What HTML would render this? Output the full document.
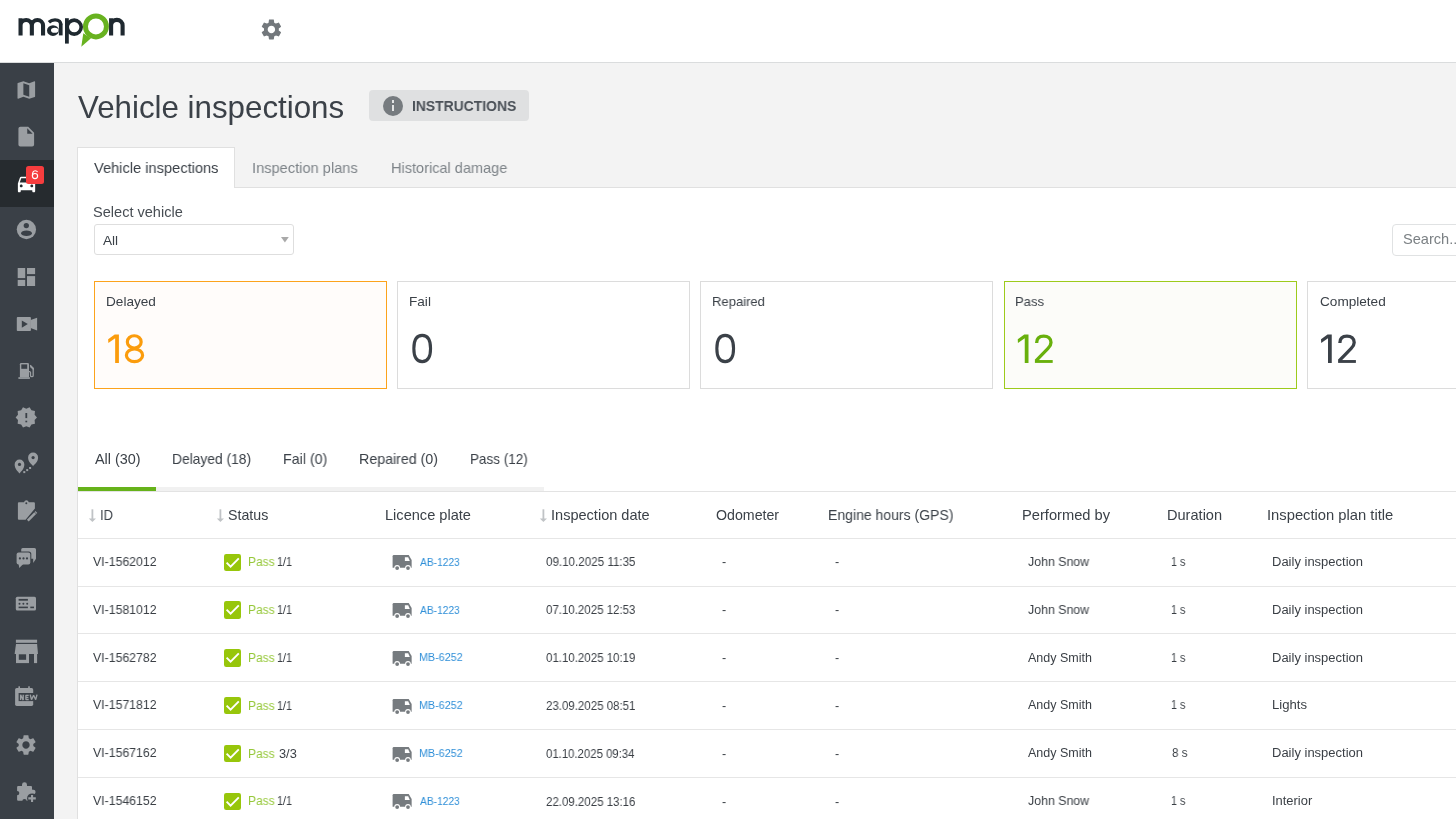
<!DOCTYPE html>
<html><head><meta charset="utf-8">
<style>
*{box-sizing:border-box;margin:0;padding:0}
html,body{width:1456px;height:819px;overflow:hidden;background:#f3f3f3;font-family:"Liberation Sans",sans-serif;color:#3b4148}
.t{position:absolute;line-height:1;white-space:pre;transform-origin:0 0;will-change:transform}
.a{position:absolute}
svg{position:absolute;overflow:visible}
</style></head><body>
<!-- header -->
<div class="a" style="left:0;top:0;width:1456px;height:62px;background:#fff"></div>
<div class="a" style="left:0;top:62px;width:1456px;height:1px;background:#dadcdd"></div>
<!-- logo -->
<svg style="left:0;top:0" width="140" height="60" viewBox="0 0 140 60">
 <g fill="none" stroke="#1f2930" stroke-width="4.1">
  <path d="M20.55 18.2V35.6M20.55 25.6A5.65 5.65 0 0 1 31.85 25.6V35.6M31.85 25.6A5.6 5.6 0 0 1 43.05 25.6V35.6"/>
  <path d="M60.75 23.5V35.4" stroke-width="3.7"/>
  <path d="M48.9 22.2C50.6 20.6 52.6 19.9 55 19.9C58.8 19.9 60.75 21.8 60.75 24.8" stroke-width="3.4"/>
  <path d="M66.9 18.2V43.6" stroke-width="3.8"/>
  <circle cx="74.2" cy="27.1" r="7.0" stroke-width="3.6"/>
  <path d="M111.1 18.2V35.6M111.1 25.6A5.75 5.75 0 0 1 122.6 25.6V35.6"/>
 </g>
 <path fill="#1f2930" fill-rule="evenodd" d="M47 30.55A5.95 5.35 0 0 0 58.9 30.55A5.95 5.35 0 0 0 47 30.55ZM50.95 30.3A3.75 2.55 0 0 0 58.45 30.3A3.75 2.55 0 0 0 50.95 30.3Z"/>
 <circle cx="95.95" cy="26.45" r="10.5" fill="none" stroke="#68b220" stroke-width="4.95"/>
 <path d="M83.3 33.3L91 38.2L81.3 46.7Z" fill="#68b220"/>
</svg>
<!-- header gear -->
<svg style="left:259.4px;top:17.2px" width="24" height="24" viewBox="0 0 24 24"><path fill="#73787c" transform="translate(12.4 12.5) scale(1.03) translate(-12 -12)" d="M19.14 12.94c.04-.3.06-.61.06-.94 0-.32-.02-.64-.07-.94l2.03-1.58c.18-.14.23-.41.12-.61l-1.92-3.32c-.12-.22-.37-.29-.59-.22l-2.39.96c-.5-.38-1.03-.7-1.62-.94l-.36-2.54c-.04-.24-.24-.41-.48-.41h-3.84c-.24 0-.43.17-.47.41l-.36 2.54c-.59.24-1.13.57-1.62.94l-2.39-.96c-.22-.08-.47 0-.59.22L2.74 8.87c-.12.21-.08.47.12.61l2.03 1.58c-.05.3-.09.63-.09.94s.02.64.07.94l-2.030 1.58c-.18.14-.23.41-.12.61l1.92 3.32c.12.22.37.29.59.22l2.39-.96c.5.38 1.03.7 1.62.94l.36 2.54c.05.24.24.41.48.41h3.84c.24 0 .44-.17.47-.41l.36-2.54c.59-.24 1.13-.56 1.62-.94l2.39.96c.22.08.47 0 .59-.22l1.92-3.32c.12-.22.07-.47-.12-.61l-2.01-1.58zM12 15.6c-1.98 0-3.6-1.62-3.6-3.6s1.62-3.6 3.6-3.6 3.6 1.62 3.6 3.6-1.62 3.6-3.6 3.6z"/></svg>

<!-- sidebar -->
<div class="a" style="left:0;top:63px;width:54px;height:756px;background:#3a4047"></div>
<div class="a" style="left:0;top:160.3px;width:54px;height:46.5px;background:#262b2f"></div>
<svg style="left:12px;top:75.10px" width="30" height="30" viewBox="0 0 30 30"><path fill="#9a9ea2" transform="translate(2.57 3.27) scale(0.978)" d="M20.5 3l-.16.03L15 5.1 9 3 3.36 4.9c-.21.07-.36.25-.36.48V20.5c0 .28.22.5.5.5l.16-.03L9 18.9l6 2.1 5.64-1.9c.21-.07.36-.25.36-.48V3.5c0-.28-.22-.5-.5-.5zM15 19l-6-2.11V5l6 2.11V19z"/></svg>
<svg style="left:12px;top:121.86px" width="30" height="30" viewBox="0 0 30 30"><path fill="#9a9ea2" transform="translate(2.5 2.9) scale(0.98)" d="M6 2c-1.1 0-1.99.9-1.99 2L4 20c0 1.1.89 2 1.99 2H18c1.1 0 2-.9 2-2V8l-6-6H6zm7 7V3.5L18.5 9H13z"/></svg>
<svg style="left:14.6px;top:172.2px" width="24" height="24" viewBox="0 0 24 24"><path fill="#fff" transform="scale(0.96)" d="M18.92 6.01C18.72 5.42 18.16 5 17.5 5h-11c-.66 0-1.21.42-1.42 1.01L3 12v8c0 .55.45 1 1 1h1c.55 0 1-.45 1-1v-1h12v1c0 .55.45 1 1 1h1c.55 0 1-.45 1-1v-8l-2.08-5.99zM6.5 16c-.83 0-1.5-.67-1.5-1.5S5.67 13 6.5 13s1.5.67 1.5 1.5S7.33 16 6.5 16zm11 0c-.83 0-1.5-.67-1.5-1.5s.67-1.5 1.5-1.5 1.5.67 1.5 1.5-.67 1.5-1.5 1.5zM5 11l1.5-4.5h11L19 11H5z"/></svg><div class="a" style="left:26.3px;top:166px;width:17.7px;height:17.8px;background:#f63d3e;border-radius:2.5px"></div><svg style="left:0;top:0" width="60" height="200" viewBox="0 0 60 200"><ellipse cx="35" cy="176.05" rx="2.6" ry="2.55" fill="none" stroke="#fff" stroke-width="1.15"/><path d="M32.42 176.1C32.3 172.6 33.3 170.7 35.25 170.7C36.3 170.7 37.1 171.2 37.55 172.1" fill="none" stroke="#fff" stroke-width="1.15"/></svg>
<svg style="left:12px;top:215.38px" width="30" height="30" viewBox="0 0 30 30"><circle cx="14.4" cy="14.5" r="9.65" fill="#9a9ea2"/><circle cx="14.3" cy="10.6" r="2.65" fill="#3a4047"/><ellipse cx="14.5" cy="18.3" rx="5.5" ry="2.75" fill="#3a4047"/></svg>
<svg style="left:12px;top:262.14px" width="30" height="30" viewBox="0 0 30 30"><g fill="#9a9ea2"><rect x="5.7" y="6" width="7.5" height="10.1"/><rect x="5.7" y="17.9" width="7.5" height="6.1"/><rect x="15" y="6" width="8.1" height="6.1"/><rect x="15" y="14.1" width="8.1" height="9.9"/></g></svg>
<svg style="left:12px;top:308.90px" width="30" height="30" viewBox="0 0 30 30"><rect x="4.8" y="8.1" width="14.1" height="13.9" rx="0.8" fill="#9a9ea2"/><path d="M18.6 11L25.1 8.8V21.6L18.6 19Z" fill="#9a9ea2"/><path d="M9.8 11.4L15.8 15.05L9.8 18.7Z" fill="#3a4047"/></svg>
<svg style="left:12px;top:355.66px" width="30" height="30" viewBox="0 0 30 30"><path d="M7.9 8.2Q7.9 7 9.1 7H15.8Q17 7 17 8.2V21.3H7.9Z" fill="#9a9ea2"/><rect x="6.4" y="21.2" width="11.5" height="1.7" fill="#9a9ea2"/><rect x="9.3" y="8.4" width="5.9" height="4.4" fill="#3a4047"/><path d="M17 15.6H17.6Q18.5 15.6 18.5 16.5V19.4Q18.5 20.6 19.8 20.6Q21.2 20.6 21.2 19.4V12.3L18.2 9.3" fill="none" stroke="#9a9ea2" stroke-width="1.3"/><path d="M18.1 8.9L21.9 12.2V14.4L18.2 11.2Z" fill="#9a9ea2"/></svg>
<svg style="left:12px;top:402.42px" width="30" height="30" viewBox="0 0 30 30"><polygon points="25.00,15.40 22.62,18.10 22.96,21.69 19.44,22.48 17.61,25.58 14.30,24.15 10.99,25.58 9.16,22.48 5.64,21.69 5.98,18.10 3.60,15.40 5.98,12.70 5.64,9.11 9.16,8.32 10.99,5.22 14.30,6.65 17.61,5.22 19.44,8.32 22.96,9.11 22.62,12.70" fill="#9a9ea2"/><rect x="13.4" y="11" width="1.8" height="5.1" fill="#3a4047"/><rect x="13.4" y="18.7" width="1.8" height="1.6" fill="#3a4047"/></svg>
<svg style="left:12px;top:449.18px" width="30" height="30" viewBox="0 0 30 30"><path d="M2.65 15.40A4.85 4.85 0 0 1 12.35 15.40C12.35 19.77 8.96 22.40 7.50 24.40C6.04 22.40 2.65 19.77 2.65 15.40Z" fill="#9a9ea2"/><circle cx="7.5" cy="15.4" r="1.6" fill="#3a4047"/><path d="M16.10 8.60A5.0 5.0 0 0 1 26.10 8.60C26.10 13.10 22.60 15.20 21.10 17.20C19.60 15.20 16.10 13.10 16.10 8.60Z" fill="#9a9ea2"/><circle cx="21.1" cy="8.6" r="1.6" fill="#3a4047"/><g fill="#9a9ea2"><rect x="11.3" y="22.1" width="2" height="2"/><rect x="14.2" y="20.1" width="2" height="2"/><rect x="17.1" y="18" width="2" height="2"/></g></svg>
<svg style="left:12px;top:495.94px" width="30" height="30" viewBox="0 0 30 30"><path d="M5.9 7.2Q5.9 6.2 6.9 6.2H12Q12.6 4.2 14.4 4.2Q16.2 4.2 16.8 6.2H21.9Q22.9 6.2 22.9 7.2V12.6L13.6 23.8H6.9Q5.9 23.8 5.9 22.8Z" fill="#9a9ea2"/><circle cx="14.3" cy="7.3" r="1" fill="#3a4047"/><path d="M15.8 24.6L23.2 17.2" stroke="#9a9ea2" stroke-width="2.6"/><path d="M23.6 16.8L24.4 16" stroke="#9a9ea2" stroke-width="2.6"/></svg>
<svg style="left:12px;top:542.70px" width="30" height="30" viewBox="0 0 30 30"><path d="M9.2 6.5Q9.2 5 10.7 5H22.5Q24 5 24 6.5V15.8L21.2 20V15.8H9.2Z" fill="#9a9ea2"/><rect x="3.6" y="8.5" width="15.7" height="13.9" rx="2.6" fill="#3a4047"/><rect x="4.6" y="9.5" width="13.7" height="11.9" rx="2" fill="#9a9ea2"/><path d="M6.6 21H11.2L7.3 24.9Z" fill="#9a9ea2"/><g fill="#3a4047"><circle cx="7.9" cy="15.4" r="1.1"/><circle cx="11.5" cy="15.4" r="1.1"/><circle cx="15" cy="15.4" r="1.1"/></g></svg>
<svg style="left:12px;top:589.46px" width="30" height="30" viewBox="0 0 30 30"><rect x="3.8" y="7.7" width="20.2" height="13.9" rx="1.5" fill="#9a9ea2"/><g fill="#3a4047"><rect x="6.6" y="9.9" width="9.3" height="1.8"/><circle cx="7.5" cy="14.7" r="1"/><circle cx="11.4" cy="14.7" r="1"/><circle cx="15.2" cy="14.7" r="1"/><rect x="6.6" y="17.6" width="9.3" height="1.6"/><rect x="18.3" y="17.6" width="3.7" height="1.6"/></g></svg>
<svg style="left:12px;top:636.22px" width="30" height="30" viewBox="0 0 30 30"><g fill="#9a9ea2"><rect x="3.9" y="3.7" width="21.2" height="3.1"/><path d="M4 8.1H25.1L26 17.9H2.6Z"/><path d="M4 17.9H17V27.1H4Z"/><rect x="22" y="17.9" width="3.1" height="9.2"/></g><rect x="6.8" y="18.3" width="7.3" height="5.5" fill="#3a4047"/></svg>
<svg style="left:12px;top:682.98px" width="30" height="30" viewBox="0 0 30 30"><rect x="3.1" y="5.1" width="18.1" height="17.8" rx="1.6" fill="#9a9ea2"/><rect x="6.4" y="3.3" width="1.6" height="3" fill="#9a9ea2"/><rect x="16.2" y="3.3" width="1.6" height="3" fill="#9a9ea2"/><rect x="6.6" y="10" width="19.6" height="8.1" fill="#3a4047"/><path d="M8.6 17.1V11.7L11.2 17.1V11.7M16.7 12.3H13.9V16.5H16.7M13.9 14.4H16.4M18.2 11.7L19.5 16.7L21.6 12.3L23.7 16.7L25 11.7" fill="none" stroke="#9a9ea2" stroke-width="1.35" stroke-linejoin="bevel"/></svg>
<svg style="left:14.3px;top:732.74px" width="24" height="24" viewBox="0 0 24 24"><path fill="#9a9ea2" transform="translate(12 12) scale(1.02) translate(-12 -12)" d="M19.14 12.94c.04-.3.06-.61.06-.94 0-.32-.02-.64-.07-.94l2.03-1.58c.18-.14.23-.41.12-.61l-1.92-3.32c-.12-.22-.37-.29-.59-.22l-2.39.96c-.5-.38-1.03-.7-1.62-.94l-.36-2.54c-.04-.24-.24-.41-.48-.41h-3.84c-.24 0-.43.17-.47.41l-.36 2.54c-.59.24-1.13.57-1.62.94l-2.39-.96c-.22-.08-.47 0-.59.22L2.74 8.870c-.12.21-.08.47.12.61l2.03 1.58c-.05.3-.09.63-.09.94s.02.64.07.94l-2.03 1.58c-.18.14-.23.41-.12.61l1.92 3.32c.12.22.37.29.59.22l2.39-.96c.5.38 1.03.7 1.62.94l.36 2.54c.05.24.24.41.48.41h3.84c.24 0 .44-.17.47-.41l.36-2.54c.59-.24 1.13-.56 1.62-.94l2.39.96c.22.08.47 0 .59-.22l1.92-3.32c.12-.22.07-.47-.12-.61l-2.01-1.58zM12 15.6c-1.98 0-3.6-1.62-3.6-3.6s1.62-3.6 3.6-3.6 3.6 1.62 3.6 3.6-1.62 3.6-3.6 3.6z"/></svg>
<svg style="left:12px;top:776.50px" width="30" height="30" viewBox="0 0 30 30"><g fill="#9a9ea2"><rect x="5.1" y="9" width="14.9" height="14.8" rx="1"/><circle cx="12.5" cy="7.7" r="2.45"/><rect x="10.05" y="7.7" width="4.9" height="2"/><circle cx="21.2" cy="15.1" r="2.4"/><rect x="19" y="12.7" width="2.2" height="4.8"/></g><g fill="#3a4047"><circle cx="5.1" cy="16.1" r="2.2"/><circle cx="12.5" cy="24.3" r="2.2"/><circle cx="20.1" cy="21.4" r="5.0"/></g><path d="M20.05 17.9V24.9M16.3 21.4H23.8" stroke="#9a9ea2" stroke-width="2.1"/></svg>

<!-- main -->
<!-- title + button -->
<div class="a" style="left:368.8px;top:90.3px;width:160px;height:30.7px;background:#dfe0e1;border-radius:4px"></div>
<div class="a" style="left:382.8px;top:95.5px;width:20.3px;height:20.3px;background:#767b7f;border-radius:50%"></div>
<div class="a" style="left:391.8px;top:104.8px;width:2.4px;height:6.3px;background:#e3e4e5"></div>
<div class="a" style="left:391.8px;top:100.4px;width:2.4px;height:2.5px;background:#e3e4e5"></div>

<!-- tab bar -->
<div class="a" style="left:77px;top:187px;width:1379px;height:632px;background:#fff;border-left:1px solid #e0e0e0;border-top:1px solid #e0e0e0"></div>
<div class="a" style="left:77px;top:147px;width:158px;height:41px;background:#fff;border:1px solid #e0e0e0;border-bottom:none"></div>

<!-- select -->
<div class="a" style="left:94.2px;top:224.2px;width:199.4px;height:30.5px;background:#fff;border:1px solid #dedede;border-radius:3px"></div>
<svg style="left:281px;top:236.9px" width="8" height="6" viewBox="0 0 8 6"><path d="M0 0H7.8L3.9 5.5Z" fill="#a9a9a9"/></svg>
<!-- search -->
<div class="a" style="left:1392.3px;top:224px;width:120px;height:32px;background:#fff;border:1px solid #e0e2e3;border-radius:4px"></div>

<!-- cards -->
<div class="a" style="left:94px;top:281px;width:293px;height:108px;background:#fffcfa;border:1px solid #fca31c"></div>
<div class="a" style="left:397px;top:281px;width:293px;height:108px;background:#fff;border:1px solid #dcdcdc"></div>
<div class="a" style="left:700px;top:281px;width:293px;height:108px;background:#fff;border:1px solid #dcdcdc"></div>
<div class="a" style="left:1004px;top:281px;width:293px;height:108px;background:#fcfcf9;border:1px solid #9dcb1c"></div>
<div class="a" style="left:1307px;top:281px;width:293px;height:108px;background:#fff;border:1px solid #dcdcdc"></div>

<!-- filter tabs underline -->
<div class="a" style="left:78px;top:487px;width:466px;height:4px;background:#f1f1f1"></div>
<div class="a" style="left:78px;top:487px;width:78px;height:4px;background:#66b21a"></div>

<!-- table lines -->
<div class="a" style="left:78px;top:491px;width:1378px;height:1px;background:#e3e3e3"></div>
<div class="a" style="left:78px;top:537.7px;width:1378px;height:1px;background:#e6e6e6"></div>
<div class="a" style="left:78px;top:585.5px;width:1378px;height:1px;background:#e6e6e6"></div>
<div class="a" style="left:78px;top:633.4px;width:1378px;height:1px;background:#e6e6e6"></div>
<div class="a" style="left:78px;top:681.3px;width:1378px;height:1px;background:#e6e6e6"></div>
<div class="a" style="left:78px;top:729.2px;width:1378px;height:1px;background:#e6e6e6"></div>
<div class="a" style="left:78px;top:777.1px;width:1378px;height:1px;background:#e6e6e6"></div>

<svg style="left:88.2px;top:508.8px" width="9" height="14" viewBox="0 0 9 14"><rect x="3.5" y="0.3" width="1.8" height="10" fill="#c0c3c6"/><path d="M0.8 9.4H8L4.4 13Z" fill="#c0c3c6"/></svg>
<svg style="left:215.8px;top:508.8px" width="9" height="14" viewBox="0 0 9 14"><rect x="3.5" y="0.3" width="1.8" height="10" fill="#c0c3c6"/><path d="M0.8 9.4H8L4.4 13Z" fill="#c0c3c6"/></svg>
<svg style="left:539.0px;top:508.8px" width="9" height="14" viewBox="0 0 9 14"><rect x="3.5" y="0.3" width="1.8" height="10" fill="#c0c3c6"/><path d="M0.8 9.4H8L4.4 13Z" fill="#c0c3c6"/></svg>
<div class="a" style="left:224.1px;top:553.60px;width:17.3px;height:17.3px;background:#97c60b;border-radius:2.2px"></div>
<svg style="left:224.1px;top:553.60px" width="18" height="18" viewBox="0 0 18 18"><path d="M2.6 8.6L6.6 12.6L14.8 4.3" fill="none" stroke="#fff" stroke-width="1.9"/></svg>
<svg style="left:388px;top:550.00px" width="30" height="25" viewBox="0 0 30 25"><path d="M4.6 6.3Q4.6 5 5.9 5H20.7L23.65 10V17.7H4.6Z" fill="#767b7f"/><path d="M16.9 7.2H20.2L21.8 11.1H16.9Z" fill="#fff"/><circle cx="9.15" cy="18" r="2.9" fill="#fff"/><circle cx="20" cy="18" r="2.9" fill="#fff"/><circle cx="9.15" cy="18.1" r="1.9" fill="#767b7f"/><circle cx="20" cy="18.1" r="1.9" fill="#767b7f"/></svg>
<div class="a" style="left:224.1px;top:601.40px;width:17.3px;height:17.3px;background:#97c60b;border-radius:2.2px"></div>
<svg style="left:224.1px;top:601.40px" width="18" height="18" viewBox="0 0 18 18"><path d="M2.6 8.6L6.6 12.6L14.8 4.3" fill="none" stroke="#fff" stroke-width="1.9"/></svg>
<svg style="left:388px;top:597.80px" width="30" height="25" viewBox="0 0 30 25"><path d="M4.6 6.3Q4.6 5 5.9 5H20.7L23.65 10V17.7H4.6Z" fill="#767b7f"/><path d="M16.9 7.2H20.2L21.8 11.1H16.9Z" fill="#fff"/><circle cx="9.15" cy="18" r="2.9" fill="#fff"/><circle cx="20" cy="18" r="2.9" fill="#fff"/><circle cx="9.15" cy="18.1" r="1.9" fill="#767b7f"/><circle cx="20" cy="18.1" r="1.9" fill="#767b7f"/></svg>
<div class="a" style="left:224.1px;top:649.30px;width:17.3px;height:17.3px;background:#97c60b;border-radius:2.2px"></div>
<svg style="left:224.1px;top:649.30px" width="18" height="18" viewBox="0 0 18 18"><path d="M2.6 8.6L6.6 12.6L14.8 4.3" fill="none" stroke="#fff" stroke-width="1.9"/></svg>
<svg style="left:388px;top:645.70px" width="30" height="25" viewBox="0 0 30 25"><path d="M4.6 6.3Q4.6 5 5.9 5H20.7L23.65 10V17.7H4.6Z" fill="#767b7f"/><path d="M16.9 7.2H20.2L21.8 11.1H16.9Z" fill="#fff"/><circle cx="9.15" cy="18" r="2.9" fill="#fff"/><circle cx="20" cy="18" r="2.9" fill="#fff"/><circle cx="9.15" cy="18.1" r="1.9" fill="#767b7f"/><circle cx="20" cy="18.1" r="1.9" fill="#767b7f"/></svg>
<div class="a" style="left:224.1px;top:697.20px;width:17.3px;height:17.3px;background:#97c60b;border-radius:2.2px"></div>
<svg style="left:224.1px;top:697.20px" width="18" height="18" viewBox="0 0 18 18"><path d="M2.6 8.6L6.6 12.6L14.8 4.3" fill="none" stroke="#fff" stroke-width="1.9"/></svg>
<svg style="left:388px;top:693.60px" width="30" height="25" viewBox="0 0 30 25"><path d="M4.6 6.3Q4.6 5 5.9 5H20.7L23.65 10V17.7H4.6Z" fill="#767b7f"/><path d="M16.9 7.2H20.2L21.8 11.1H16.9Z" fill="#fff"/><circle cx="9.15" cy="18" r="2.9" fill="#fff"/><circle cx="20" cy="18" r="2.9" fill="#fff"/><circle cx="9.15" cy="18.1" r="1.9" fill="#767b7f"/><circle cx="20" cy="18.1" r="1.9" fill="#767b7f"/></svg>
<div class="a" style="left:224.1px;top:745.10px;width:17.3px;height:17.3px;background:#97c60b;border-radius:2.2px"></div>
<svg style="left:224.1px;top:745.10px" width="18" height="18" viewBox="0 0 18 18"><path d="M2.6 8.6L6.6 12.6L14.8 4.3" fill="none" stroke="#fff" stroke-width="1.9"/></svg>
<svg style="left:388px;top:741.50px" width="30" height="25" viewBox="0 0 30 25"><path d="M4.6 6.3Q4.6 5 5.9 5H20.7L23.65 10V17.7H4.6Z" fill="#767b7f"/><path d="M16.9 7.2H20.2L21.8 11.1H16.9Z" fill="#fff"/><circle cx="9.15" cy="18" r="2.9" fill="#fff"/><circle cx="20" cy="18" r="2.9" fill="#fff"/><circle cx="9.15" cy="18.1" r="1.9" fill="#767b7f"/><circle cx="20" cy="18.1" r="1.9" fill="#767b7f"/></svg>
<div class="a" style="left:224.1px;top:793.00px;width:17.3px;height:17.3px;background:#97c60b;border-radius:2.2px"></div>
<svg style="left:224.1px;top:793.00px" width="18" height="18" viewBox="0 0 18 18"><path d="M2.6 8.6L6.6 12.6L14.8 4.3" fill="none" stroke="#fff" stroke-width="1.9"/></svg>
<svg style="left:388px;top:789.40px" width="30" height="25" viewBox="0 0 30 25"><path d="M4.6 6.3Q4.6 5 5.9 5H20.7L23.65 10V17.7H4.6Z" fill="#767b7f"/><path d="M16.9 7.2H20.2L21.8 11.1H16.9Z" fill="#fff"/><circle cx="9.15" cy="18" r="2.9" fill="#fff"/><circle cx="20" cy="18" r="2.9" fill="#fff"/><circle cx="9.15" cy="18.1" r="1.9" fill="#767b7f"/><circle cx="20" cy="18.1" r="1.9" fill="#767b7f"/></svg>

<svg style="left:0;top:0" width="1456" height="400" viewBox="0 0 1456 400"><polygon points="114.70,334.40 118.90,334.40 118.90,362.90 115.15,362.90 115.15,338.15 108.35,342.90 108.15,339.30" fill="#fb9c0c"/><ellipse cx="134.25" cy="341.9" rx="6.9" ry="6.15" fill="none" stroke="#fb9c0c" stroke-width="3.2"/><ellipse cx="134.5" cy="355.3" rx="8.1" ry="6.3" fill="none" stroke="#fb9c0c" stroke-width="3.2"/><path d="M422.20 335.40C427.54 335.40 430.55 340.12 430.55 348.50C430.55 356.88 427.54 361.60 422.20 361.60C416.86 361.60 413.85 356.88 413.85 348.50C413.85 340.12 416.86 335.40 422.20 335.40Z" fill="none" stroke="#3b4148" stroke-width="3.1"/><path d="M725.20 335.40C730.54 335.40 733.55 340.12 733.55 348.50C733.55 356.88 730.54 361.60 725.20 361.60C719.86 361.60 716.85 356.88 716.85 348.50C716.85 340.12 719.86 335.40 725.20 335.40Z" fill="none" stroke="#3b4148" stroke-width="3.1"/><polygon points="1024.30,334.40 1028.50,334.40 1028.50,362.90 1024.75,362.90 1024.75,338.15 1017.95,342.90 1017.75,339.30" fill="#68b00c"/><path d="M1036.65 342.9C1036.65 337.9 1039.80 336.05 1043.75 336.05C1048.10 336.05 1051.00 338.6 1051.00 342.4C1051.00 344.9 1049.80 346.7 1047.80 348.7L1035.90 360.9" fill="none" stroke="#68b00c" stroke-width="3.3"/><rect x="1034.90" y="360.05" width="17.8" height="2.85" fill="#68b00c"/><polygon points="1327.55,334.40 1331.75,334.40 1331.75,362.90 1328.00,362.90 1328.00,338.15 1321.20,342.90 1321.00,339.30" fill="#3b4148"/><path d="M1339.85 342.9C1339.85 337.9 1343.00 336.05 1346.95 336.05C1351.30 336.05 1354.20 338.6 1354.20 342.4C1354.20 344.9 1353.00 346.7 1351.00 348.7L1339.10 360.9" fill="none" stroke="#3b4148" stroke-width="3.3"/><rect x="1338.10" y="360.05" width="17.8" height="2.85" fill="#3b4148"/></svg>
<div class="t" style="left:78.30px;top:91.58px;font-size:30.5px;color:#3b4148;transform:scaleX(1.0259);">Vehicle inspections</div>
<div class="t" style="left:411.95px;top:98.59px;font-size:14.6px;color:#4b5158;font-weight:bold;transform:scaleX(0.9528);">INSTRUCTIONS</div>
<div class="t" style="left:94.20px;top:160.05px;font-size:15px;color:#3b4148;transform:scaleX(0.9756);">Vehicle inspections</div>
<div class="t" style="left:251.53px;top:160.05px;font-size:15px;color:#7d8388;transform:scaleX(0.9748);">Inspection plans</div>
<div class="t" style="left:390.53px;top:160.05px;font-size:15px;color:#7d8388;transform:scaleX(0.9689);">Historical damage</div>
<div class="t" style="left:93.35px;top:205.87px;font-size:13.8px;color:#474d53;transform:scaleX(1.0548);">Select vehicle</div>
<div class="t" style="left:103.10px;top:233.64px;font-size:13.6px;color:#3b4148;">All</div>
<div class="t" style="left:1402.80px;top:232.39px;font-size:14.6px;color:#7b8084;">Search...</div>
<div class="t" style="left:105.91px;top:294.64px;font-size:13.6px;color:#3b4148;transform:scaleX(0.9917);">Delayed</div>
<div class="t" style="left:409.10px;top:294.64px;font-size:13.6px;color:#3b4148;">Fail</div>
<div class="t" style="left:712.44px;top:294.64px;font-size:13.6px;color:#3b4148;transform:scaleX(0.9593);">Repaired</div>
<div class="t" style="left:1015.24px;top:294.64px;font-size:13.6px;color:#3b4148;transform:scaleX(0.9586);">Pass</div>
<div class="t" style="left:1319.70px;top:294.64px;font-size:13.6px;color:#3b4148;transform:scaleX(0.9938);">Completed</div>
<div class="t" style="left:94.70px;top:452.26px;font-size:14.4px;color:#3b4148;transform:scaleX(0.9911);">All (30)</div>
<div class="t" style="left:171.94px;top:452.26px;font-size:14.4px;color:#3b4148;transform:scaleX(0.9605);">Delayed (18)</div>
<div class="t" style="left:283.01px;top:452.26px;font-size:14.4px;color:#3b4148;transform:scaleX(0.9884);">Fail (0)</div>
<div class="t" style="left:358.61px;top:452.26px;font-size:14.4px;color:#3b4148;transform:scaleX(0.9861);">Repaired (0)</div>
<div class="t" style="left:469.86px;top:452.26px;font-size:14.4px;color:#3b4148;transform:scaleX(0.9383);">Pass (12)</div>
<div class="t" style="left:100.49px;top:507.83px;font-size:14.2px;color:#3b4148;transform:scaleX(0.9077);">ID</div>
<div class="t" style="left:227.60px;top:507.83px;font-size:14.2px;color:#3b4148;">Status</div>
<div class="t" style="left:385.47px;top:507.83px;font-size:14.2px;color:#3b4148;transform:scaleX(1.0280);">Licence plate</div>
<div class="t" style="left:551.37px;top:507.83px;font-size:14.2px;color:#3b4148;transform:scaleX(1.0253);">Inspection date</div>
<div class="t" style="left:715.50px;top:507.83px;font-size:14.2px;color:#3b4148;">Odometer</div>
<div class="t" style="left:827.81px;top:507.83px;font-size:14.2px;color:#3b4148;transform:scaleX(0.9881);">Engine hours (GPS)</div>
<div class="t" style="left:1022.07px;top:507.83px;font-size:14.2px;color:#3b4148;transform:scaleX(1.0345);">Performed by</div>
<div class="t" style="left:1166.77px;top:507.83px;font-size:14.2px;color:#3b4148;transform:scaleX(1.0269);">Duration</div>
<div class="t" style="left:1266.96px;top:507.83px;font-size:14.2px;color:#3b4148;transform:scaleX(1.0400);">Inspection plan title</div>
<div class="t" style="left:92.60px;top:555.88px;font-size:12.5px;color:#3a3f45;transform:scaleX(0.9831);">VI-1562012</div>
<div class="t" style="left:247.93px;top:556.04px;font-size:12.3px;color:#96c83a;transform:scaleX(0.9731);">Pass</div>
<div class="t" style="left:277.32px;top:556.04px;font-size:12.3px;color:#3a3f45;transform:scaleX(0.8812);">1/1</div>
<div class="t" style="left:419.50px;top:556.73px;font-size:11.5px;color:#2f8fd8;transform:scaleX(0.8889);">AB-1223</div>
<div class="t" style="left:545.60px;top:556.30px;font-size:12.0px;color:#3a3f45;transform:scaleX(0.9674);">09.10.2025 11:35</div>
<div class="t" style="left:721.50px;top:556.38px;font-size:12.5px;color:#3a3f45;">-</div>
<div class="t" style="left:834.50px;top:556.38px;font-size:12.5px;color:#3a3f45;">-</div>
<div class="t" style="left:1027.80px;top:555.88px;font-size:12.5px;color:#3a3f45;transform:scaleX(0.9887);">John Snow</div>
<div class="t" style="left:1170.94px;top:555.88px;font-size:12.5px;color:#3a3f45;transform:scaleX(0.8562);">1 s</div>
<div class="t" style="left:1271.66px;top:555.88px;font-size:12.5px;color:#3a3f45;transform:scaleX(1.0395);">Daily inspection</div>
<div class="t" style="left:92.60px;top:603.67px;font-size:12.5px;color:#3a3f45;transform:scaleX(0.9831);">VI-1581012</div>
<div class="t" style="left:247.93px;top:603.84px;font-size:12.3px;color:#96c83a;transform:scaleX(0.9731);">Pass</div>
<div class="t" style="left:277.32px;top:603.84px;font-size:12.3px;color:#3a3f45;transform:scaleX(0.8812);">1/1</div>
<div class="t" style="left:419.50px;top:604.52px;font-size:11.5px;color:#2f8fd8;transform:scaleX(0.8889);">AB-1223</div>
<div class="t" style="left:545.60px;top:604.10px;font-size:12.0px;color:#3a3f45;transform:scaleX(0.9570);">07.10.2025 12:53</div>
<div class="t" style="left:721.50px;top:604.17px;font-size:12.5px;color:#3a3f45;">-</div>
<div class="t" style="left:834.50px;top:604.17px;font-size:12.5px;color:#3a3f45;">-</div>
<div class="t" style="left:1027.80px;top:603.67px;font-size:12.5px;color:#3a3f45;transform:scaleX(0.9887);">John Snow</div>
<div class="t" style="left:1170.94px;top:603.67px;font-size:12.5px;color:#3a3f45;transform:scaleX(0.8562);">1 s</div>
<div class="t" style="left:1271.66px;top:603.67px;font-size:12.5px;color:#3a3f45;transform:scaleX(1.0395);">Daily inspection</div>
<div class="t" style="left:92.60px;top:651.57px;font-size:12.5px;color:#3a3f45;transform:scaleX(0.9831);">VI-1562782</div>
<div class="t" style="left:247.93px;top:651.74px;font-size:12.3px;color:#96c83a;transform:scaleX(0.9731);">Pass</div>
<div class="t" style="left:277.32px;top:651.74px;font-size:12.3px;color:#3a3f45;transform:scaleX(0.8812);">1/1</div>
<div class="t" style="left:418.56px;top:652.42px;font-size:11.5px;color:#2f8fd8;transform:scaleX(0.9370);">MB-6252</div>
<div class="t" style="left:545.60px;top:652.00px;font-size:12.0px;color:#3a3f45;transform:scaleX(0.9570);">01.10.2025 10:19</div>
<div class="t" style="left:721.50px;top:652.07px;font-size:12.5px;color:#3a3f45;">-</div>
<div class="t" style="left:834.50px;top:652.07px;font-size:12.5px;color:#3a3f45;">-</div>
<div class="t" style="left:1027.80px;top:651.57px;font-size:12.5px;color:#3a3f45;">Andy Smith</div>
<div class="t" style="left:1170.94px;top:651.57px;font-size:12.5px;color:#3a3f45;transform:scaleX(0.8562);">1 s</div>
<div class="t" style="left:1271.66px;top:651.57px;font-size:12.5px;color:#3a3f45;transform:scaleX(1.0395);">Daily inspection</div>
<div class="t" style="left:92.60px;top:699.47px;font-size:12.5px;color:#3a3f45;transform:scaleX(0.9831);">VI-1571812</div>
<div class="t" style="left:247.93px;top:699.64px;font-size:12.3px;color:#96c83a;transform:scaleX(0.9731);">Pass</div>
<div class="t" style="left:277.32px;top:699.64px;font-size:12.3px;color:#3a3f45;transform:scaleX(0.8812);">1/1</div>
<div class="t" style="left:418.56px;top:700.32px;font-size:11.5px;color:#2f8fd8;transform:scaleX(0.9370);">MB-6252</div>
<div class="t" style="left:545.60px;top:699.90px;font-size:12.0px;color:#3a3f45;transform:scaleX(0.9570);">23.09.2025 08:51</div>
<div class="t" style="left:721.50px;top:699.97px;font-size:12.5px;color:#3a3f45;">-</div>
<div class="t" style="left:834.50px;top:699.97px;font-size:12.5px;color:#3a3f45;">-</div>
<div class="t" style="left:1027.80px;top:699.47px;font-size:12.5px;color:#3a3f45;">Andy Smith</div>
<div class="t" style="left:1170.94px;top:699.47px;font-size:12.5px;color:#3a3f45;transform:scaleX(0.8562);">1 s</div>
<div class="t" style="left:1271.65px;top:699.47px;font-size:12.5px;color:#3a3f45;transform:scaleX(1.0500);">Lights</div>
<div class="t" style="left:92.60px;top:747.38px;font-size:12.5px;color:#3a3f45;transform:scaleX(0.9831);">VI-1567162</div>
<div class="t" style="left:247.93px;top:747.54px;font-size:12.3px;color:#96c83a;transform:scaleX(0.9731);">Pass</div>
<div class="t" style="left:279.00px;top:747.54px;font-size:12.3px;color:#3a3f45;transform:scaleX(1.0412);">3/3</div>
<div class="t" style="left:418.56px;top:748.23px;font-size:11.5px;color:#2f8fd8;transform:scaleX(0.9370);">MB-6252</div>
<div class="t" style="left:545.60px;top:747.80px;font-size:12.0px;color:#3a3f45;transform:scaleX(0.9468);">01.10.2025 09:34</div>
<div class="t" style="left:721.50px;top:747.88px;font-size:12.5px;color:#3a3f45;">-</div>
<div class="t" style="left:834.50px;top:747.88px;font-size:12.5px;color:#3a3f45;">-</div>
<div class="t" style="left:1027.80px;top:747.38px;font-size:12.5px;color:#3a3f45;">Andy Smith</div>
<div class="t" style="left:1171.80px;top:747.38px;font-size:12.5px;color:#3a3f45;transform:scaleX(0.9235);">8 s</div>
<div class="t" style="left:1271.66px;top:747.38px;font-size:12.5px;color:#3a3f45;transform:scaleX(1.0395);">Daily inspection</div>
<div class="t" style="left:92.60px;top:795.27px;font-size:12.5px;color:#3a3f45;transform:scaleX(0.9831);">VI-1546152</div>
<div class="t" style="left:247.93px;top:795.44px;font-size:12.3px;color:#96c83a;transform:scaleX(0.9731);">Pass</div>
<div class="t" style="left:277.32px;top:795.44px;font-size:12.3px;color:#3a3f45;transform:scaleX(0.8812);">1/1</div>
<div class="t" style="left:419.50px;top:796.12px;font-size:11.5px;color:#2f8fd8;transform:scaleX(0.8889);">AB-1223</div>
<div class="t" style="left:545.60px;top:795.70px;font-size:12.0px;color:#3a3f45;transform:scaleX(0.9570);">22.09.2025 13:16</div>
<div class="t" style="left:721.50px;top:795.77px;font-size:12.5px;color:#3a3f45;">-</div>
<div class="t" style="left:834.50px;top:795.77px;font-size:12.5px;color:#3a3f45;">-</div>
<div class="t" style="left:1027.80px;top:795.27px;font-size:12.5px;color:#3a3f45;transform:scaleX(0.9887);">John Snow</div>
<div class="t" style="left:1170.94px;top:795.27px;font-size:12.5px;color:#3a3f45;transform:scaleX(0.8562);">1 s</div>
<div class="t" style="left:1271.67px;top:795.27px;font-size:12.5px;color:#3a3f45;transform:scaleX(1.0342);">Interior</div>
</body></html>
